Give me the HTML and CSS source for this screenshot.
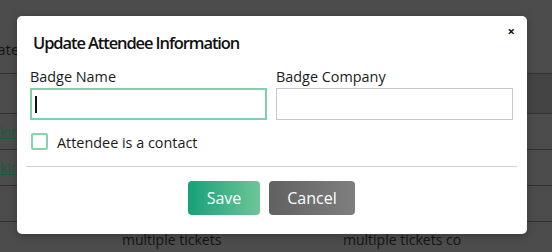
FILE: index.html
```html
<!DOCTYPE html>
<html>
<head>
<meta charset="utf-8">
<title>Update Attendee Information</title>
<link rel="stylesheet" href="styles.css">
</head>

<body>
<div class="page">
	<div class="row row_head">
		<div class="cell c1">Update</div>
		<div class="cell c2"></div>
		<div class="cell c3"></div>
	</div>
	<div class="row row_hover">
		<div class="cell c1"></div>
		<div class="cell c2"></div>
		<div class="cell c3"></div>
	</div>
	<div class="row">
		<div class="cell c1"><a href="#">Checkin</a></div>
		<div class="cell c2"></div>
		<div class="cell c3"></div>
	</div>
	<div class="row">
		<div class="cell c1"><a href="#">Checkin</a></div>
		<div class="cell c2"></div>
		<div class="cell c3"></div>
	</div>
	<div class="row">
		<div class="cell c1"></div>
		<div class="cell c2"></div>
		<div class="cell c3"></div>
	</div>
	<div class="row">
		<div class="cell c1"></div>
		<div class="cell c2">multiple tickets</div>
		<div class="cell c3">multiple tickets co</div>
	</div>
</div>

<div class="modal">
	<span class="close">&times;</span>
	<h3 class="modal_title">Update Attendee Information</h3>
	<div class="modal_body">
		<div class="fields">
			<div class="field">
				<label for="badge_name">Badge Name</label>
				<div class="input_wrap caret"><input type="text" id="badge_name" class="focus" /></div>
			</div>
			<div class="field">
				<label for="badge_company">Badge Company</label>
				<div class="input_wrap"><input type="text" id="badge_company" /></div>
			</div>
		</div>
		<div class="check_row">
			<span class="check_box"></span>
			<span class="check_label">Attendee is a contact</span>
		</div>
	</div>
	<div class="modal_foot">
		<button class="btn btn_save">Save</button>
		<button class="btn btn_cancel">Cancel</button>
	</div>
</div>
</body>
</html>
```

FILE: styles.css
```css
body,div,h3,label,input,button {margin: 0;padding: 0;}
body {background: #4c4c4c;font-family: "Open Sans", "DejaVu Sans", sans-serif;color: #141414;overflow: hidden;}

.page {margin-left: -40px;}
.row {display: flex;height: 36px;border-bottom: 1px solid #333;box-sizing: border-box;}
.row_head {height: 74px;align-items: flex-end;padding-bottom: 14px;font-size: 15px;}
.row_hover {height: 40px;}
.row_hover .c3 {background: #444;}
.cell {display: flex;align-items: center;padding-left: 8px;font-size: 14px;box-sizing: border-box;}
.row_head .cell {font-size: 15px;}
.c1 {width: 154px;}
.c2 {width: 221px;}
.c3 {flex: 1;}
.cell a {color: #1b5a3f;}

.modal {position: absolute;left: 17px;top: 16px;width: 510px;background: #fff;border-radius: 5px;box-shadow: 0 2px 8px rgba(0,0,0,.25);}
.close {position: absolute;top: 6px;right: 12px;font-size: 13px;line-height: 18px;font-weight: 700;color: #111;}
.modal_title {padding: 15px 16px 0;font-size: 16.5px;line-height: 24px;font-weight: 600;letter-spacing: -1.1px;color: #111;}

.modal_body {padding: 12px 14px 0 13px;}
.fields {display: grid;grid-template-columns: 237px 237px;gap: 9px;}
.field label {display: block;font-size: 14.4px;line-height: 20px;margin-bottom: 1px;color: #1a1a1a;}
.input_wrap {position: relative;}
.field input {display: block;width: 100%;height: 32px;box-sizing: border-box;border: 1px solid #c9c9c9;outline: 0 none;font: inherit;font-size: 14px;padding: 0 6px;}
.field input.focus {border: 2px solid #7fd1a9;}
.caret:after {content: "";position: absolute;left: 5px;top: 8px;width: 1.5px;height: 17px;background: #111;}

.check_row {display: flex;align-items: center;margin-top: 13px;padding-left: 1px;height: 17px;}
.check_box {width: 17px;height: 17px;box-sizing: border-box;border: 2px solid #86d3ad;border-radius: 2px;margin-right: 9px;}
.check_label {font-size: 14.4px;line-height: 20px;padding-top: 2px;color: #1a1a1a;}

.modal_foot {display: flex;justify-content: center;gap: 9px;margin: 16px 10px 0 9px;padding: 14px 0 19px;border-top: 1px solid #d2d2d2;}
.btn {height: 34px;border: 0 none;border-radius: 4px;color: #fff;font-family: inherit;font-size: 16px;}
.btn_save {width: 72px;background: linear-gradient(to right, #17a07a, #6dc698);}
.btn_cancel {width: 86px;background: linear-gradient(to right, #616161, #7f7f7f);}
```
